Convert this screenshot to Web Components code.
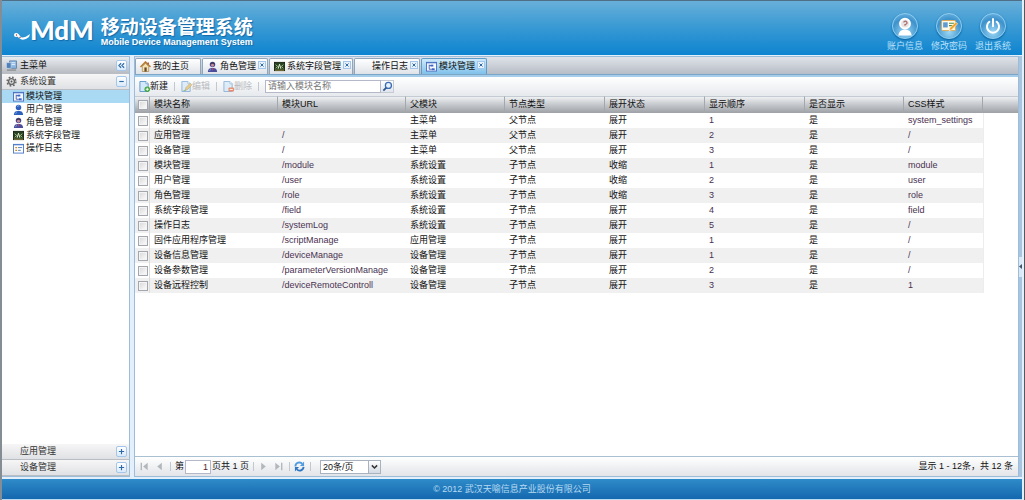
<!DOCTYPE html>
<html lang="zh-CN">
<head>
<meta charset="utf-8">
<title>移动设备管理系统</title>
<style>
html,body{margin:0;height:100%}
body{font:9px/13px "Liberation Sans","Noto Sans CJK SC",sans-serif;color:#111;background:#d9e8f6}
</style>
</head>
<body>
<mdm-app></mdm-app>
<script>
const define=(name,html,setup)=>{
  const tpl=document.createElement('template');
  tpl.innerHTML='<style>*{box-sizing:border-box}</style>'+html;
  customElements.define(name,class extends HTMLElement{
    connectedCallback(){
      if(this.shadowRoot)return;
      this.attachShadow({mode:'open'}).append(tpl.content.cloneNode(true));
      if(setup)setup(this,this.shadowRoot);
    }
  });
};

const user=c=>`<path d="M1 12C1 8.6 3 8 4.600 7.600L7.400 7.600C9 8 11 8.600 11 12Z" fill="${c}"/><circle cx="6" cy="3.800" r="3" fill="${c}"/><path d="M4.400 2.800q1-1.400 2.600-.6" stroke="#9db9ea" fill="none"/><path d="M3 11c0-1.600.8-2 1.600-2.200" stroke="#8fb0ea" fill="none" stroke-width=".8"/>`;
const page=`<path d="M1 .5h6.500L10 3v8.500H1Z" fill="#d3e8fa" stroke="#5b92c8"/><path d="M7.500.5V3H10" fill="#fff" stroke="#5b92c8" stroke-width=".7"/>`;
const first=c=>`<path d="M2.500 2v8" stroke="${c}" stroke-width="1.500"/><path d="M9.500 2v8L4.500 6Z" fill="${c}"/>`;
const prev=c=>`<path d="M8.500 2v8L3.500 6Z" fill="${c}"/>`;
const flip=s=>`<g transform="translate(12 0) scale(-1 1)">${s}</g>`;
const ICONS={
  menu:`<rect x="4" y="1" width="7.500" height="8" fill="#8fb8e0" stroke="#51779f" stroke-width=".8"/><path d="M6 3h4M6 5h4" stroke="#e8f3ff"/><rect x=".5" y="3" width="5" height="6" fill="#4f80b8" stroke="#c5d8ea" stroke-width=".7"/><path d="M1 11h10" stroke="#888" stroke-width="1.300"/>`,
  gear:`<circle cx="6" cy="6" r="3.200" fill="#ddd" stroke="#666" stroke-width="1.500"/><circle cx="6" cy="6" r="4.800" fill="none" stroke="#666" stroke-width="1.600" stroke-dasharray="1.900 1.870"/><circle cx="6" cy="6" r="1" fill="#555"/>`,
  module:`<rect x=".5" y="1.500" width="11" height="9.500" fill="#f3f8ff" stroke="#4a6fc0"/><path d="M1 2h10" stroke="#4a6fc0"/><path d="M3.500 4v5M3.500 5H6M3.500 9H8" stroke="#4b62a8" fill="none"/><rect x="5" y="4" width="3" height="2" fill="#3c63c9"/><rect x="6.500" y="8" width="3" height="2" fill="#3c63c9"/>`,
  user:user('#2d5fbd'),
  role:user('#4a4c9c')+`<path d="M3.200 3.500q2.800-5 5.600 0Z" fill="#3d3350"/><circle cx="6" cy="4.600" r="1.600" fill="#c98c8c"/><path d="M5 8h2l-1 3Z" fill="#c34a5a"/>`,
  field:`<rect x=".5" y="1.500" width="11" height="9" fill="#27401f" stroke="#182612"/><path d="M2 4l2 2-2 2M10 4L8 6l2 2" stroke="#b5d890" fill="none"/><path d="M4.500 8.500L6 3.500l1.500 5" stroke="#eaf7d9" fill="none"/><path d="M1 10h10" stroke="#b9a04c" stroke-width=".8"/>`,
  log:`<rect x=".5" y="1.500" width="11" height="9.500" fill="#fff" stroke="#4b78c8"/><path d="M1 2h10" stroke="#4b78c8"/><path d="M2.500 5h2M2.500 8h2" stroke="#d08a2a" stroke-width="1.500"/><path d="M5.500 5h4.500M5.500 8h3" stroke="#4878b8"/>`,
  home:`<path d="M2.500 6v5.500h7V6L6 2.500Z" fill="#f6e3b4" stroke="#9a7440" stroke-width=".7"/><path d="M.5 6.500L6 1l5.500 5.500" stroke="#b57b2d" stroke-width="1.600" fill="none"/><rect x="4.800" y="7" width="2.500" height="4.500" fill="#6b4a2a"/><path d="M9 1.500v2" stroke="#a33" stroke-width="1.200"/>`,
  add:page+`<circle cx="9" cy="9" r="3" fill="#3ea641"/><path d="M9 7.300v3.400M7.300 9h3.400" stroke="#fff"/>`,
  edit:`<g opacity=".65">${page}<path d="M4.500 10l1-3L10 2.500l1.800 1.800L7.500 9Z" fill="#e8b74c" stroke="#8d8340" stroke-width=".6"/><path d="M1.500 11l3-1.500L6 11Z" fill="#5fa852"/></g>`,
  del:`<g opacity=".65">${page}<rect x="6" y="7" width="6" height="4.500" rx="1" fill="#e2592d"/><path d="M7.300 9.200h3.400" stroke="#fff"/></g>`,
  search:`<circle cx="7" cy="4.800" r="3.300" fill="#e6f2ff" stroke="#3b6db2" stroke-width="1.400"/><path d="M4.700 7.200L1.500 10.500" stroke="#33588f" stroke-width="2"/>`,
  first:first('#b3b7bc'),prev:prev('#b3b7bc'),next:flip(prev('#b3b7bc')),last:flip(first('#b3b7bc')),
  refresh:`<path d="M1.500 6C1.500 1.500 7 .5 9 3" fill="none" stroke="#4f9be0" stroke-width="2"/><path d="M11 .5v5H6.500Z" fill="#4f9be0"/><path d="M10.500 6.500C10 11 5 11.500 3 9" fill="none" stroke="#2f77c4" stroke-width="2"/><path d="M1 11.500v-5h4.500Z" fill="#2f77c4"/>`,
  down:`<path d="M2.500 4.500L6 8l3.500-3.500" fill="none" stroke="#333" stroke-width="2"/>`,
  collapse:`<path d="M5.500 3l-3 3 3 3M9.500 3l-3 3 3 3" fill="none" stroke="#2e69aa" stroke-width="1.500"/>`,
  minus:`<path d="M3 6h6" stroke="#2e69aa" stroke-width="1.500"/>`,
  plus:`<path d="M2.500 6h7M6 2.500v7" stroke="#2e69aa" stroke-width="1.500"/>`,
  close:`<path d="M3 3l6 6M9 3l-6 6" stroke="#2e69aa" stroke-width="2"/>`,
  account:`<circle cx="6" cy="4.700" r="2.700" fill="#e9e4e4" stroke="#fff" stroke-width="1.100"/><path d="M5.200 4q1-1.200 1.700-.2T6 5.200v.6" fill="none" stroke="#a86d6d" stroke-width=".7"/><path d="M2.300 11.200Q2.800 7.900 6 7.900T9.700 11.200Z" fill="#fff"/>`,
  password:`<rect x="2" y="3" width="7.500" height="5.500" rx=".4" fill="#fffbe8" stroke="#e0a54a" stroke-width=".5"/><rect x="2.800" y="4" width="2.500" height="2.800" fill="#5c9bd5"/><path d="M6 4.500h2.800M6 5.800h2" stroke="#4c8c4c" stroke-width=".6"/><path d="M6 8.500l.5-1.500 3.200-3.200 1 1L7.500 8Z" fill="#f3a32b" stroke="#fff" stroke-width=".3"/>`,
  power:`<path d="M4 3.700a3.300 3.300 0 1 0 4 0M6 2.200v3.900" fill="none" stroke="#fff" stroke-width="1.100" stroke-linecap="round"/>`,
  blank:''
};
customElements.define('mdm-icon',class extends HTMLElement{
  static observedAttributes=['name'];
  constructor(){
    super();
    this.attachShadow({mode:'open'}).innerHTML=`<style>:host{display:block;flex:none;width:var(--icon,11px);height:var(--icon,11px)}svg{display:block;width:100%;height:100%}</style><svg viewBox="0 0 12 12" aria-hidden="true"></svg>`;
  }
  attributeChangedCallback(attr,old,name){this.shadowRoot.querySelector('svg').innerHTML=ICONS[name]||''}
});

define('mdm-tool-button',`<style>
:host{display:block;flex:none;--icon:9px}
button{display:grid;place-items:center;width:11px;height:11px;padding:0;border:1px solid #a4c6ea;border-radius:2px;background:linear-gradient(#fff,#d9eafb)}
:host([small]){--icon:6px}:host([small]) button{width:8px;height:8px;border-radius:0;background:#e6f1fc}
</style><button type="button"><mdm-icon></mdm-icon></button>`,
  (el,root)=>{root.querySelector('mdm-icon').setAttribute('name',el.getAttribute('icon'));root.querySelector('button').setAttribute('aria-label',el.getAttribute('label'))});

define('mdm-round-link',`<style>
:host{display:block}
a{display:flex;flex-direction:column;align-items:center;gap:1px;min-width:36px;color:#b9e0f8;text-decoration:none;white-space:nowrap}
.disc{display:grid;place-items:center;width:26px;height:26px;border-radius:50%;border:1px solid #8fcdf0;background:radial-gradient(circle at 50% 75%,#9cd8f5,#3d92cc 60%,#7cc0e8);box-shadow:0 1px 2px #0a5f9c;--icon:22px}
</style><a href="#"><span class="disc"><mdm-icon></mdm-icon></span><slot></slot></a>`,
  (el,root)=>root.querySelector('mdm-icon').setAttribute('name',el.getAttribute('icon')));

define('mdm-header',`<style>
:host{display:flex;align-items:flex-start;justify-content:space-between;height:55px;padding:12px 11px 0 12px;background:linear-gradient(#68afd9,#3c9bd4 45%,#0d84d0);border-top:1px solid #4e6f86}
.brand{display:flex;align-items:center;gap:7px;color:#fff}
.mark{display:flex;align-items:flex-end;font:900 26px/26px Lato,"Liberation Sans",sans-serif;text-shadow:1px 1px 1px #1569a8}
.mark svg{width:16px;height:12px;margin-bottom:2px}
h1{margin:0;font:700 19px/25px "Noto Sans CJK SC",sans-serif;text-shadow:1px 1px 1px #1569a8}
p{margin:0;font:700 9px/9px "Liberation Sans",sans-serif;text-shadow:1px 1px 1px #1569a8}
nav{display:flex;gap:8px}
</style>
<div class="brand">
<div class="mark"><svg viewBox="0 0 16 12" aria-hidden="true"><path d="M1 5Q4 3 6 7T16 5L15 8Q9 13 5 9T1 7Z" fill="#fff"/><circle cx="2" cy="6" r="2" fill="#fff"/><circle cx="2.500" cy="6" r=".7" fill="#a33"/><circle cx="6" cy="8.500" r=".7" fill="#a33"/></svg><span>MdM</span></div>
<div><h1>移动设备管理系统</h1><p>Mobile Device Management System</p></div></div>
<nav><mdm-round-link icon="account">账户信息</mdm-round-link><mdm-round-link icon="password">修改密码</mdm-round-link><mdm-round-link icon="power">退出系统</mdm-round-link></nav>`);

define('mdm-panel-bar',`<style>
:host{display:flex;align-items:center;gap:3px;flex:none;height:16px;padding:0 2px 0 4px;border-bottom:1px solid #b9bec4;background:linear-gradient(#f6f6f7,#e0e1e4);color:#333}
:host([main]){height:17px;background:linear-gradient(#e9ecef,#b9bdc3);color:#111}
span{flex:1}
</style><mdm-icon></mdm-icon><span><slot></slot></span><mdm-tool-button></mdm-tool-button>`,
  (el,root)=>{root.querySelector('mdm-icon').setAttribute('name',el.getAttribute('icon')||'blank');
    const b=document.createElement('mdm-tool-button');b.setAttribute('icon',el.getAttribute('tool'));b.setAttribute('label',el.getAttribute('tip'));root.querySelector('mdm-tool-button').replaceWith(b)});

define('mdm-menu-item',`<style>
:host{display:block}a{display:flex;align-items:center;gap:2px;height:13px;padding-left:11px;color:#111;text-decoration:none}
:host([selected]) a{background:#a9d9f3}
</style><a href="#"><mdm-icon></mdm-icon><slot></slot></a>`,
  (el,root)=>root.querySelector('mdm-icon').setAttribute('name',el.getAttribute('icon')));

define('mdm-sidebar',`<style>
:host{display:flex;flex-direction:column;border:1px solid #9dbcd8;border-left:0;background:#fff}
nav{flex:1;min-height:0}
</style>
<mdm-panel-bar main icon="menu" tool="collapse" tip="收起菜单">主菜单</mdm-panel-bar>
<mdm-panel-bar icon="gear" tool="minus" tip="收起">系统设置</mdm-panel-bar>
<nav><mdm-menu-item selected icon="module">模块管理</mdm-menu-item><mdm-menu-item icon="user">用户管理</mdm-menu-item><mdm-menu-item icon="role">角色管理</mdm-menu-item><mdm-menu-item icon="field">系统字段管理</mdm-menu-item><mdm-menu-item icon="log">操作日志</mdm-menu-item></nav>
<mdm-panel-bar tool="plus" tip="展开">应用管理</mdm-panel-bar>
<mdm-panel-bar tool="plus" tip="展开">设备管理</mdm-panel-bar>`);

define('mdm-tab',`<style>
:host{display:flex;align-items:center;gap:2px;min-width:66px;height:16px;padding:0 1px 0 4px;border:1px solid #8fa6bd;border-bottom:0;border-radius:2px 2px 0 0;background:linear-gradient(#fff,#dfe3e8);white-space:nowrap}
:host([active]){background:linear-gradient(#cdeafb,#7fc0ea);border-color:#5f9cc9}
mdm-tool-button{align-self:flex-start;padding-top:2px}
button{padding:0;border:0;background:none;font:inherit;color:inherit}
</style><mdm-icon></mdm-icon><button type="button"><slot></slot></button><mdm-tool-button small icon="close" label="关闭"></mdm-tool-button>`,
  (el,root)=>{root.querySelector('mdm-icon').setAttribute('name',el.getAttribute('icon'));if(el.hasAttribute('fixed'))root.querySelector('mdm-tool-button').remove()});

define('mdm-tabs',`<style>
:host{display:flex;align-items:flex-end;gap:1px;height:18px;background:linear-gradient(#dfe3e9,#b7bdc6);border-top:1px solid #9dbcd8}
</style><mdm-tab icon="home" fixed>我的主页</mdm-tab><mdm-tab icon="role">角色管理</mdm-tab><mdm-tab icon="field">系统字段管理</mdm-tab><mdm-tab icon="blank">操作日志</mdm-tab><mdm-tab icon="module" active>模块管理</mdm-tab>`);

define('mdm-toolbar',`<style>
:host{display:flex;align-items:center;gap:4px;height:19px;padding:0 4px;background:linear-gradient(#fff,#e6e9ed)}
button{display:flex;align-items:center;gap:0;padding:0;border:0;background:none;font:inherit;color:#111}
button:disabled{color:#b9bbbe}
i{width:1px;height:9px;margin:0 2px;background:#c3c8ce}
form{display:flex;height:13px}
input{width:116px;height:13px;padding:0 2px;border:1px solid #b5b8c8;background:#fff;font:inherit;color:#555}
input::placeholder{color:#777;opacity:1}
form button{width:13px;justify-content:center;border:1px solid #c5cad3;border-left:0;background:linear-gradient(#fff,#dfe5ee)}
</style>
<button type="button"><mdm-icon name="add"></mdm-icon>新建</button><i></i><button type="button" disabled><mdm-icon name="edit"></mdm-icon>编辑</button><i></i><button type="button" disabled><mdm-icon name="del"></mdm-icon>删除</button><i></i>
<form><input type="text" placeholder="请输入模块名称" aria-label="模块名称"><button type="button" aria-label="搜索"><mdm-icon name="search"></mdm-icon></button></form>`);

const ROWS=[
['系统设置','','主菜单','父节点','展开','1','是','system_settings'],
['应用管理','/','主菜单','父节点','展开','2','是','/'],
['设备管理','/','主菜单','父节点','展开','3','是','/'],
['模块管理','/module','系统设置','子节点','收缩','1','是','module'],
['用户管理','/user','系统设置','子节点','收缩','2','是','user'],
['角色管理','/role','系统设置','子节点','收缩','3','是','role'],
['系统字段管理','/field','系统设置','子节点','展开','4','是','field'],
['操作日志','/systemLog','系统设置','子节点','展开','5','是','/'],
['固件应用程序管理','/scriptManage','应用管理','子节点','展开','1','是','/'],
['设备信息管理','/deviceManage','设备管理','子节点','展开','1','是','/'],
['设备参数管理','/parameterVersionManage','设备管理','子节点','展开','2','是','/'],
['设备远程控制','/deviceRemoteControll','设备管理','子节点','展开','3','是','1']];
define('mdm-grid',`<style>
:host{display:block;background:#fff;overflow:hidden}
table{width:100%;table-layout:fixed;border-collapse:separate;border-spacing:0}
.c0{width:15px}.c1{width:128px}.c3{width:99px}.c4{width:100px}.c5{width:79px}
th,td{padding:0 4px;text-align:left;font-weight:400;white-space:nowrap;vertical-align:middle}
th{height:17px;background:linear-gradient(#eef0f2,#c6c9cd 50%,#a2a6ab);border-right:1px solid #a4a8ad;border-top:1px solid #c5cbd2;border-bottom:1px solid #a0a4a9}
th:last-child{border-right:0}
td{height:15px}
td.latin{color:#4a3050}
td:first-child,th:first-child{padding:0 0 0 3px}
td:first-child{border-right:1px solid #dcdcdc}
tr:nth-child(even) td{background:#f0f0f0}
td:last-child,tr:nth-child(even) td:last-child{background:#fff;border-left:1px solid #ededed}
input{display:block;appearance:none;width:10px;height:10px;margin:0;border:1px solid #a3a7ad;background:linear-gradient(135deg,#d6d6d6,#fff);box-shadow:inset 0 0 0 1px #f4f4f4}
</style>
<table><colgroup><col class="c0"><col class="c1"><col class="c1"><col class="c3"><col class="c4"><col class="c4"><col class="c4"><col class="c3"><col class="c5"><col></colgroup>
<thead><tr><th><input type="checkbox" aria-label="全选"></th><th>模块名称</th><th>模块URL</th><th>父模块</th><th>节点类型</th><th>展开状态</th><th>显示顺序</th><th>是否显示</th><th>CSS样式</th><th></th></tr></thead><tbody></tbody></table>`,
  (el,root)=>{root.querySelector('tbody').innerHTML=ROWS.map(r=>`<tr><td><input type="checkbox" aria-label="${r[0]}"></td>${r.map((c,i)=>`<td${[1,5,7].includes(i)?' class="latin"':''}>${c}</td>`).join('')}<td></td></tr>`).join('')});

define('mdm-pager',`<style>
:host{display:flex;align-items:center;gap:3px;height:20px;padding:0 5px 0 4px;border-top:1px solid #a9bfd2;background:linear-gradient(#fff,#e2e4e8);white-space:nowrap}
button{display:block;width:12px;padding:0;border:0;background:none}
i{width:1px;height:9px;background:#c3c8ce;margin:0 1px}
label{display:flex;align-items:center;gap:1px}
input{width:26px;height:14px;padding:0 2px;border:1px solid #b5b8c8;background:#fff;font:inherit;color:#5a1f30;text-align:right}
.size{position:relative;display:flex;margin-left:5px}
select{appearance:none;width:61px;height:14px;padding:0 14px 0 2px;border:1px solid #a9b2bf;border-radius:0;background:#fff;font:inherit;color:#111}
.size span{position:absolute;right:0;top:0;display:grid;place-items:center;width:13px;height:14px;border:1px solid #a9b2bf;background:linear-gradient(#fff,#d3dae3);pointer-events:none;--icon:9px}
.total{margin-left:auto}
</style>
<button type="button" aria-label="首页"><mdm-icon name="first"></mdm-icon></button><button type="button" aria-label="上一页"><mdm-icon name="prev"></mdm-icon></button><i></i>
<label>第<input type="text" value="1">页共 1 页</label><i></i>
<button type="button" aria-label="下一页"><mdm-icon name="next"></mdm-icon></button><button type="button" aria-label="末页"><mdm-icon name="last"></mdm-icon></button><i></i>
<button type="button" aria-label="刷新"><mdm-icon name="refresh"></mdm-icon></button><i></i>
<div class="size"><select aria-label="每页条数"><option>20条/页</option></select><span><mdm-icon name="down"></mdm-icon></span></div>
<div class="total">显示 1 - 12条，共 12 条</div>`);

define('mdm-app',`<style>
:host{display:flex;flex-direction:column;min-height:100vh;padding-right:2px;border-left:2px solid #848d94;border-right:1px solid #55595d;background:#e3f0fb}
.body{flex:1;display:grid;grid-template-columns:128px minmax(0,1fr) 3px;padding-top:1px}
main{display:flex;flex-direction:column;margin-left:4px;border:1px solid #9dbcd8;border-top:0}
mdm-tabs,mdm-toolbar,mdm-pager{flex:none}
.strip{height:3px;background:#a5cdea;border-top:1px solid #7ba6c8}
mdm-grid{flex:1}
.rail{display:grid;align-items:center;background:#a9c4df}
.rail button{width:3px;height:20px;padding:0;border:0;background:#dbe8f5;display:grid;place-items:center}
.rail svg{width:3px;height:5px}
footer{height:21px;margin-top:2px;border-bottom:1px solid #b9dcf2;background:linear-gradient(#2f8bc9,#1468ae);color:#b5daf3;text-align:center;line-height:20px}
</style>
<mdm-header></mdm-header>
<div class="body"><mdm-sidebar></mdm-sidebar><main><mdm-tabs></mdm-tabs><div class="strip"></div><mdm-toolbar></mdm-toolbar><mdm-grid></mdm-grid><mdm-pager></mdm-pager></main><div class="rail"><button type="button" aria-label="展开侧栏"><svg viewBox="0 0 3 5"><path d="M3 0v5L0 2.500Z" fill="#456"/></svg></button></div></div>
<footer>© 2012 武汉天喻信息产业股份有限公司</footer>`);
</script>
</body>
</html>
